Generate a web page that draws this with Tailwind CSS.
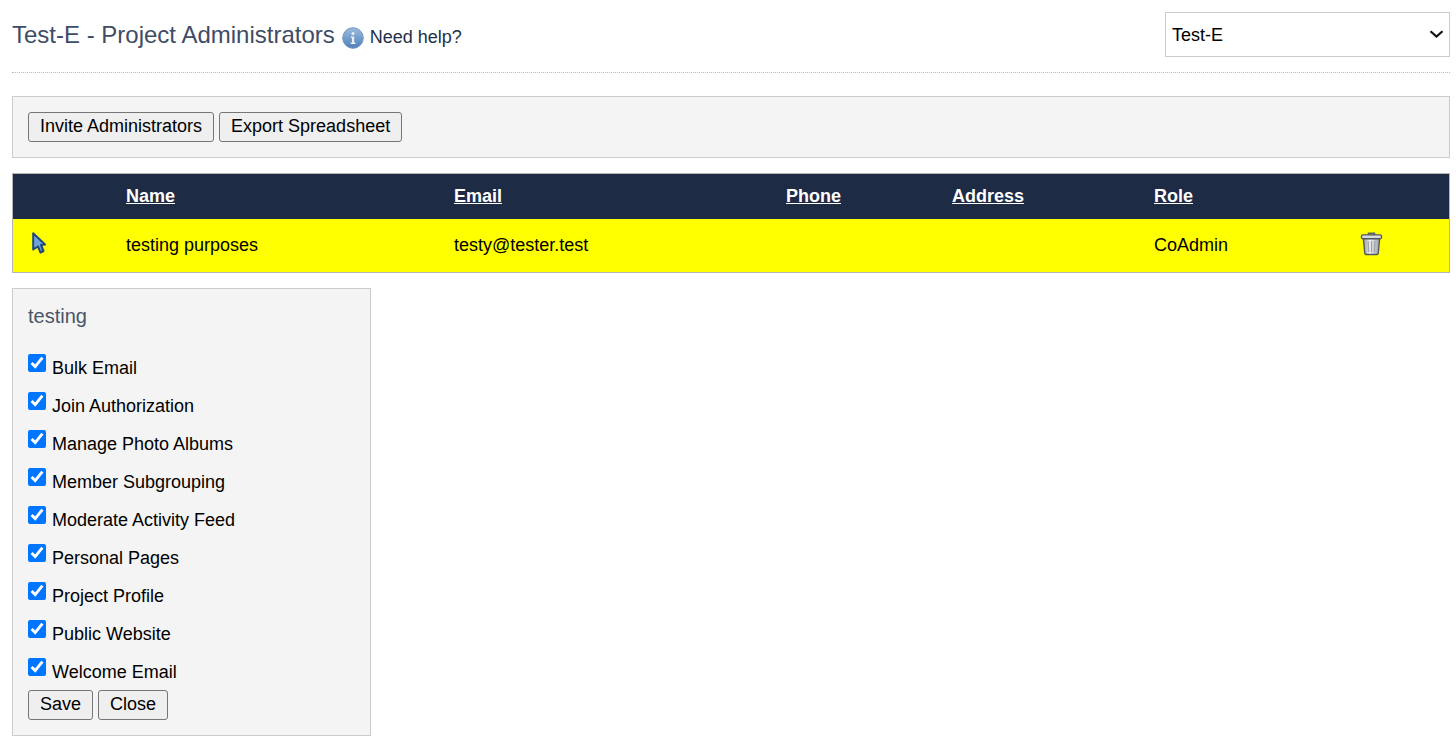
<!DOCTYPE html>
<html lang="en">
<head>
    <meta charset="UTF-8">
    <title>Test-E - Project Administrators</title>
    <script src="https://cdn.jsdelivr.net/npm/@tailwindcss/browser@4"></script>
</head>
<body class="bg-white text-black text-[18px] [font-family:'Liberation_Sans',Arial,sans-serif] overflow-hidden">
    <div class="pl-3 pr-[6px] pt-3">
        <!-- header -->
        <div class="flex justify-between h-[60px] border-b border-dotted border-[#bbbbbb] box-content">
            <div class="flex items-start pt-[8px]">
                <h1 class="text-[24px] leading-[30px] font-normal text-[#3e4c66]">Test-E - Project Administrators</h1>
                <svg class="ml-[7px] mt-[7px]" width="22" height="22" viewBox="0 0 22 22">
                    <defs>
                        <linearGradient id="infoFill" x1="0" y1="0" x2="0" y2="1">
                            <stop offset="0" stop-color="#9dbbdc"/>
                            <stop offset="1" stop-color="#4f80b8"/>
                        </linearGradient>
                    </defs>
                    <circle cx="11" cy="11" r="10.3" fill="url(#infoFill)" stroke="#6f97c4"/>
                    <circle cx="11" cy="6.5" r="1.5" fill="#e8eff7"/>
                    <path d="M9 9.5h3.2v6H13.5v1.5H8.7v-1.5H10V11H9z" fill="#e8eff7"/>
                </svg>
                <span class="ml-[6px] mt-[4px] leading-[26px] text-[#22304a]">Need help?</span>
            </div>
            <div class="relative w-[285px] h-[45px]">
                <select class="w-full h-full appearance-none bg-white border border-[#cccccc] pl-[6px] pt-[2px] text-[18px] text-black">
                    <option>Test-E</option>
                </select>
                <svg class="absolute right-[6px] top-[18px] pointer-events-none" width="15" height="8" viewBox="0 0 15 8">
                    <path d="M1.5 1.2 L7.5 6.5 L13.5 1.2" fill="none" stroke="#111111" stroke-width="2.2"/>
                </svg>
            </div>
        </div>

        <!-- toolbar -->
        <div class="mt-[23px] h-[62px] flex items-center gap-[5px] px-[15px] bg-[#f4f4f4] border border-[#cccccc]">
            <button class="h-[30px] px-[11px] pb-[2px] bg-[#efefef] border border-[#767676] rounded-[3px] leading-none">Invite Administrators</button>
            <button class="h-[30px] px-[11px] pb-[2px] bg-[#efefef] border border-[#767676] rounded-[3px] leading-none">Export Spreadsheet</button>
        </div>

        <!-- admins table -->
        <div class="mt-[15px] border border-[#b5b5b5]">
            <table class="w-full table-fixed border-collapse">
                <colgroup>
                    <col class="w-[113px]"><col class="w-[328px]"><col class="w-[332px]"><col class="w-[166px]"><col class="w-[202px]"><col class="w-[206px]"><col>
                </colgroup>
                <thead>
                    <tr class="h-[45px] bg-[#1e2b45] text-white text-left">
                        <th></th>
                        <th class="font-bold underline">Name</th>
                        <th class="font-bold underline">Email</th>
                        <th class="font-bold underline">Phone</th>
                        <th class="font-bold underline">Address</th>
                        <th class="font-bold underline">Role</th>
                        <th></th>
                    </tr>
                </thead>
                <tbody>
                    <tr class="h-[53px] bg-[#ffff00]">
                        <td class="pl-[19px]">
                            <svg class="mb-[5px]" width="15" height="22" viewBox="0 0 15 22">
                                <path d="M1.2 1.2 L13 12.5 L9 13 L11.5 19 L8.5 20.5 L6 14.5 L1.2 17.5 Z" fill="#6fa3da" stroke="#1f4a78" stroke-width="2" stroke-linejoin="round"/>
                            </svg>
                        </td>
                        <td>testing purposes</td>
                        <td>testy@tester.test</td>
                        <td></td>
                        <td></td>
                        <td>CoAdmin</td>
                        <td>
                            <svg class="mb-[5px]" width="23" height="25" viewBox="0 0 24 26">
                                <defs>
                                    <linearGradient id="binFill" x1="0" y1="0" x2="1" y2="0">
                                        <stop offset="0" stop-color="#8f949b"/>
                                        <stop offset="0.4" stop-color="#f1f2f4"/>
                                        <stop offset="1" stop-color="#9a9fa6"/>
                                    </linearGradient>
                                </defs>
                                <path d="M9 4V2.5h6V4" fill="none" stroke="#5f6369" stroke-width="1.8"/>
                                <rect x="1.5" y="4" width="21" height="4" rx="1.5" fill="#d8dadd" stroke="#53575c" stroke-width="1.4"/>
                                <path d="M3.5 8h17l-1.5 15.5a1.5 1.5 0 0 1-1.5 1h-11a1.5 1.5 0 0 1-1.5-1z" fill="url(#binFill)" stroke="#53575c" stroke-width="1.4"/>
                                <path d="M8.5 10.5l.5 11.5M12 10.5V22M15.5 10.5l-.5 11.5" stroke="#a2a6ac" stroke-width="1.4"/>
                            </svg>
                        </td>
                    </tr>
                </tbody>
            </table>
        </div>

        <!-- permissions panel -->
        <div class="mt-[15px] w-[359px] h-[448px] bg-[#f4f4f4] border border-[#cccccc] px-[15px] pt-[14px]">
            <div class="text-[20px] leading-[26px] text-[#4a5568]">testing</div>
            <div class="mt-[12px] flex flex-col">
                <label class="h-[38px] flex items-start gap-[6px]"><input type="checkbox" checked class="w-[18px] h-[18px] mt-[13px]"><span class="mt-[17px] leading-[20px]">Bulk Email</span></label>
                <label class="h-[38px] flex items-start gap-[6px]"><input type="checkbox" checked class="w-[18px] h-[18px] mt-[13px]"><span class="mt-[17px] leading-[20px]">Join Authorization</span></label>
                <label class="h-[38px] flex items-start gap-[6px]"><input type="checkbox" checked class="w-[18px] h-[18px] mt-[13px]"><span class="mt-[17px] leading-[20px]">Manage Photo Albums</span></label>
                <label class="h-[38px] flex items-start gap-[6px]"><input type="checkbox" checked class="w-[18px] h-[18px] mt-[13px]"><span class="mt-[17px] leading-[20px]">Member Subgrouping</span></label>
                <label class="h-[38px] flex items-start gap-[6px]"><input type="checkbox" checked class="w-[18px] h-[18px] mt-[13px]"><span class="mt-[17px] leading-[20px]">Moderate Activity Feed</span></label>
                <label class="h-[38px] flex items-start gap-[6px]"><input type="checkbox" checked class="w-[18px] h-[18px] mt-[13px]"><span class="mt-[17px] leading-[20px]">Personal Pages</span></label>
                <label class="h-[38px] flex items-start gap-[6px]"><input type="checkbox" checked class="w-[18px] h-[18px] mt-[13px]"><span class="mt-[17px] leading-[20px]">Project Profile</span></label>
                <label class="h-[38px] flex items-start gap-[6px]"><input type="checkbox" checked class="w-[18px] h-[18px] mt-[13px]"><span class="mt-[17px] leading-[20px]">Public Website</span></label>
                <label class="h-[38px] flex items-start gap-[6px]"><input type="checkbox" checked class="w-[18px] h-[18px] mt-[13px]"><span class="mt-[17px] leading-[20px]">Welcome Email</span></label>
            </div>
            <div class="flex gap-[5px] mt-[7px]">
                <button class="h-[30px] px-[11px] pb-[2px] bg-[#efefef] border border-[#767676] rounded-[3px] leading-none">Save</button>
                <button class="h-[30px] px-[11px] pb-[2px] bg-[#efefef] border border-[#767676] rounded-[3px] leading-none">Close</button>
            </div>
        </div>
    </div>
</body>
</html>
